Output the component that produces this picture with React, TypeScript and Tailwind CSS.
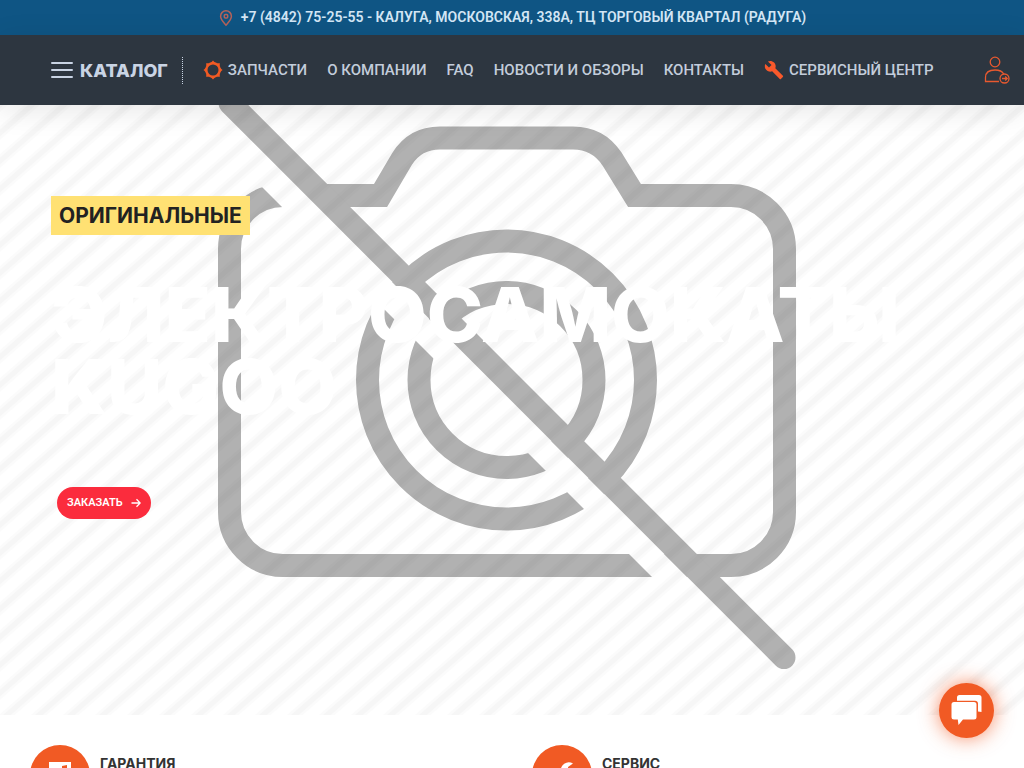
import type { ReactNode } from "react";

function PinIcon() {
  return (
    <svg viewBox="0 0 16 18" className="w-4 h-[18px]" fill="none" stroke="#b5635a" strokeWidth="1.5" aria-hidden="true">
      <path d="M8 16.2C5.6 13.4 2.6 10.400 2.600 7.200a5.400 5.400 0 0 1 10.800 0C13.400 10.400 10.400 13.400 8 16.200Z" />
      <rect x="6.300" y="5.500" width="3.400" height="3.400" rx="1" />
    </svg>
  );
}

function GearIcon() {
  return (
    <svg viewBox="0 0 20 20" className="size-5" fill="none" stroke="#f15a24" aria-hidden="true">
      <circle cx="10" cy="10" r="6.700" strokeWidth="2.400" />
      <path
        d="M10 .8 12 3H8ZM16.500 3.500l-.2 3-2.800-2.800ZM19.200 10 17 12V8ZM16.500 16.500l-3-.2 2.800-2.800ZM10 19.200 8 17h4ZM3.500 16.500l.2-3 2.800 2.800ZM.8 10 3 8v4ZM3.500 3.500l3 .2-2.800 2.800Z"
        fill="#f15a24"
        strokeWidth=".6"
      />
    </svg>
  );
}

function WrenchIcon() {
  return (
    <svg viewBox="0 0 24 24" className="size-5" fill="#f9592b" aria-hidden="true">
      <path d="M22.700 19l-9.100-9.100c.9-2.300.4-5-1.500-6.900-2-2-5-2.400-7.400-1.300L9 6 6 9 1.600 4.700C.4 7.100.9 10.100 2.900 12.100c1.900 1.900 4.600 2.400 6.900 1.500l9.100 9.100c.4.4 1 .4 1.400 0l2.300-2.300c.5-.4.5-1.100.1-1.400Z" />
    </svg>
  );
}

function UserIcon() {
  return (
    <svg viewBox="0 0 26 28" className="w-[26px] h-7" fill="none" stroke="#e8592f" strokeWidth="1.300" aria-hidden="true">
      <circle cx="11" cy="6" r="4.800" />
      <path d="M15 25.500H1.500v-4C1.500 16.500 5.500 14 11 14c4 0 7.300 1.300 8.700 4" />
      <circle cx="20.500" cy="22.500" r="4.500" />
      <path d="M18 22.500h5M21.200 20.500l2 2-2 2" />
    </svg>
  );
}

function ChatIcon() {
  return (
    <svg viewBox="0 0 32 32" className="size-8" fill="#fff" aria-hidden="true">
      <path d="M8.500 0H28a2.500 2.500 0 0 1 2.500 2.500V17l-3.500-.6V8.500A3 3 0 0 0 24 5.800H6V2.500A2.500 2.500 0 0 1 8.500 0Z" />
      <path d="M3 7h20a2.500 2.500 0 0 1 2.500 2.500v12.500A2.500 2.500 0 0 1 23 24.500H12L7.500 30 6.800 24.500H3A2.500 2.500 0 0 1 .5 22V9.500A2.500 2.500 0 0 1 3 7Z" />
    </svg>
  );
}

function NoPhoto() {
  return (
    <svg viewBox="0 0 1024 610" preserveAspectRatio="xMidYMid slice" className="absolute inset-0 size-full" aria-hidden="true">
      <defs>
        <pattern id="stripes" width="32" height="28" patternUnits="userSpaceOnUse">
          <path d="M-16 14 16-14M-16 42 48-14M16 42 48 14" stroke="#000" strokeWidth="10" strokeOpacity=".016" />
          <path d="M-16 14 16-14M-16 42 48-14M16 42 48 14" stroke="#000" strokeWidth="5" strokeOpacity=".02" />
        </pattern>
        <mask id="gap" maskUnits="userSpaceOnUse" x="0" y="-20" width="1024" height="650">
          <rect y="-20" width="1024" height="650" fill="#fff" />
          <path d="M160-20 810 630H845L195-20Z" fill="#000" />
        </mask>
      </defs>
      <rect width="1024" height="610" fill="#fff" />
      <g fill="none" stroke="#b1b1b1" strokeWidth="23">
        <g mask="url(#gap)">
          <path d="M326 90.500H380.500L402 54Q415 33 440 33H573Q598 33 612 54L634.500 90.500H731A53.500 53.500 0 0 1 784.500 144V407A53.500 53.500 0 0 1 731 460.500H283A53.500 53.500 0 0 1 229.500 407V144A53.500 53.500 0 0 1 283 90.500" />
          <circle cx="506.500" cy="275" r="139" />
          <circle cx="506.500" cy="275" r="87.500" />
        </g>
        <path d="M230-2 784 552.500" strokeLinecap="round" />
      </g>
      <rect width="1024" height="610" fill="url(#stripes)" />
    </svg>
  );
}

function NavLink({ icon, children }: { icon?: ReactNode; children: ReactNode }) {
  return (
    <a href="#" className="flex items-center gap-[5px] text-[#c3cddb] hover:text-white">
      {icon}
      {children}
    </a>
  );
}

function Feature({ title, children }: { title: string; children: ReactNode }) {
  return (
    <div className="flex gap-2.5">
      <div className="size-[60px] shrink-0 rounded-full bg-[#f15a24] flex items-center justify-center">
        <svg viewBox="0 0 30 30" className="size-[30px]" fill="#fff" aria-hidden="true">
          {children}
        </svg>
      </div>
      <h3 className="pt-2.5 font-[Inter,sans-serif] text-[14px] leading-[18px] font-bold text-[#333]">{title}</h3>
    </div>
  );
}

export default function App() {
  return (
    <div className="h-screen overflow-hidden bg-white font-[Roboto,sans-serif]">
      <div className="h-[35px] bg-[#0f5584] flex items-center justify-center gap-[7px] text-[14px] font-semibold text-[#d3e6f5]">
        <PinIcon />
        <a href="tel:+74842752555">+7 (4842) 75-25-55 - КАЛУГА, МОСКОВСКАЯ, 338А, ТЦ ТОРГОВЫЙ КВАРТАЛ (РАДУГА)</a>
      </div>

      <header className="relative z-10 h-[70px] bg-[#2d3640] flex items-center pl-[51px] pr-3.5 shadow-[0_5px_30px_rgba(0,0,0,0.1)]">
        <button className="flex items-center gap-[7px] font-[Inter,sans-serif] text-[18px] font-extrabold text-[#c9d4e4]">
          <svg viewBox="0 0 22 16" className="w-[22px] h-4" stroke="#c9d4e4" strokeWidth="2" strokeLinecap="round" aria-hidden="true">
            <path d="M1 1h20M1 8h20M1 15h20" />
          </svg>
          КАТАЛОГ
        </button>
        <span className="h-[27px] ml-3.5 border-l border-dotted border-[#c9d4e4]" />
        <nav className="flex items-center gap-5 ml-5 text-[15px] font-medium whitespace-nowrap">
          <NavLink icon={<GearIcon />}>ЗАПЧАСТИ</NavLink>
          <NavLink>О КОМПАНИИ</NavLink>
          <NavLink>FAQ</NavLink>
          <NavLink>НОВОСТИ И ОБЗОРЫ</NavLink>
          <NavLink>КОНТАКТЫ</NavLink>
          <NavLink icon={<WrenchIcon />}>СЕРВИСНЫЙ ЦЕНТР</NavLink>
        </nav>
        <a href="#" aria-label="Войти" className="ml-auto">
          <UserIcon />
        </a>
      </header>

      <section className="relative h-[610px] overflow-hidden">
        <NoPhoto />
        <div className="relative pt-[91px] pl-[51px]">
          <p className="w-fit bg-[#ffe173] px-2 font-[Inter,sans-serif] text-[21px] leading-[39px] font-bold text-[#222]">ОРИГИНАЛЬНЫЕ</p>
          <h1 className="mt-[43px] font-[Inter,sans-serif] text-[76px] leading-[72px] font-extrabold text-white">
            ЭЛЕКТРОСАМОКАТЫ
            <br />
            KUGOO
          </h1>
          <button className="mt-[65px] ml-1.5 h-8 rounded-full bg-[#fb2c3d] px-2.5 flex items-center gap-2 text-[11px] font-semibold text-white">
            ЗАКАЗАТЬ
            <svg viewBox="0 0 10 10" className="size-2.5" fill="none" stroke="#fff" strokeWidth="1.300" aria-hidden="true">
              <path d="M.5 5h8.500M5.500 1.200 9.200 5 5.500 8.800" />
            </svg>
          </button>
        </div>
      </section>

      <section className="grid grid-cols-2 gap-10 px-[30px] pt-[30px]">
        <Feature title="ГАРАНТИЯ">
          <path d="M4 2H26V28H4ZM17 6v5h5V5Z" fillRule="evenodd" />
        </Feature>
        <Feature title="СЕРВИС">
          <path d="M26 3.500 21 7v4l4 1 4-4A8 8 0 0 1 18 16L7 28l-4-4L14 12A8 8 0 0 1 26 3.500Z" />
        </Feature>
      </section>

      <button
        aria-label="Чат"
        className="fixed right-[30px] bottom-[30px] z-20 size-[55px] rounded-full bg-[#f15a24] flex items-center justify-center shadow-[0_0_20px_rgba(241,90,36,0.7)]"
      >
        <ChatIcon />
      </button>
    </div>
  );
}
